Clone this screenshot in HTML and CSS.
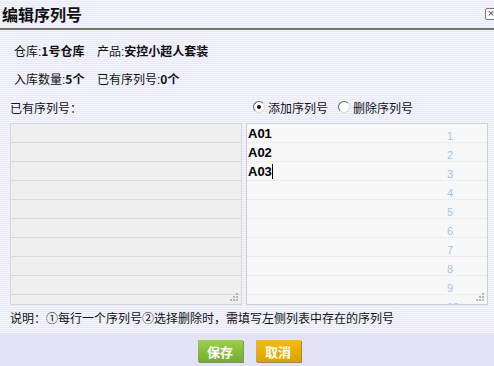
FILE: index.html
```html
<!DOCTYPE html>
<html lang="zh-CN">
<head>
<meta charset="utf-8">
<title>编辑序列号</title>
<link rel="stylesheet" href="styles.css">
</head>
<body>
<div class="dialog">
  <div class="titlebar">
    <h1 class="title">编辑序列号</h1>
    <span class="close">×</span>
  </div>
  <div class="content">
    <div class="info">
      <span class="item">仓库:<b>1号仓库</b></span><span class="item">产品:<b>安控小超人套装</b></span>
    </div>
    <div class="info">
      <span class="item">入库数量:<b>5个</b></span><span class="item">已有序列号:<b>0个</b></span>
    </div>
    <div class="toolbar">
      <span class="label">已有序列号：</span>
      <span class="options">
        <span class="radio checked"></span><span class="opt">添加序列号</span>
        <span class="radio"></span><span class="opt">删除序列号</span>
      </span>
    </div>
    <div class="panels">
      <div class="box box-left">
        <div class="lrow"></div><div class="lrow"></div><div class="lrow"></div>
        <div class="lrow"></div><div class="lrow"></div><div class="lrow"></div>
        <div class="lrow"></div><div class="lrow"></div><div class="lrow"></div>
        <div class="lrow"></div>
        <svg class="grip" width="9" height="9" viewBox="0 0 9 9"><g fill="#b4b4b4"><rect x="6" y="0" width="2" height="2"/><rect x="3" y="3" width="2" height="2"/><rect x="6" y="3" width="2" height="2"/><rect x="0" y="6" width="2" height="2"/><rect x="3" y="6" width="2" height="2"/><rect x="6" y="6" width="2" height="2"/></g></svg>
      </div>
      <div class="box box-right">
        <div class="rrow"><span class="code">A01</span><span class="num">1</span></div>
        <div class="rrow"><span class="code">A02</span><span class="num">2</span></div>
        <div class="rrow"><span class="code">A03<i class="caret"></i></span><span class="num">3</span></div>
        <div class="rrow"><span class="code"></span><span class="num">4</span></div>
        <div class="rrow"><span class="code"></span><span class="num">5</span></div>
        <div class="rrow"><span class="code"></span><span class="num">6</span></div>
        <div class="rrow"><span class="code"></span><span class="num">7</span></div>
        <div class="rrow"><span class="code"></span><span class="num">8</span></div>
        <div class="rrow"><span class="code"></span><span class="num">9</span></div>
        <div class="rrow"><span class="code"></span><span class="num">10</span></div>
        <svg class="grip" width="9" height="9" viewBox="0 0 9 9"><g fill="#b4b4b4"><rect x="6" y="0" width="2" height="2"/><rect x="3" y="3" width="2" height="2"/><rect x="6" y="3" width="2" height="2"/><rect x="0" y="6" width="2" height="2"/><rect x="3" y="6" width="2" height="2"/><rect x="6" y="6" width="2" height="2"/></g></svg>
      </div>
    </div>
    <p class="note">说明：①每行一个序列号②选择删除时，需填写左侧列表中存在的序列号</p>
  </div>
  <div class="footer">
    <button class="btn btn-save">保存</button>
    <button class="btn btn-cancel">取消</button>
  </div>
</div>
</body>
</html>
```
FILE: styles.css
```css
html, body {
  margin: 0;
  padding: 0;
}
body {
  width: 494px;
  height: 366px;
  overflow: hidden;
  font-family: "Liberation Sans", "Noto Sans CJK SC", sans-serif;
  font-size: 12px;
  color: #111;
}
.dialog {
  width: 494px;
  height: 366px;
  display: flex;
  flex-direction: column;
  background: repeating-linear-gradient(to bottom, #f5f5fd 0, #f5f5fd 1px, #e8e9f8 1px, #e8e9f8 2px);
}
.titlebar {
  position: relative;
  height: 28px;
  border-bottom: 2px solid #78785a;
  display: flex;
  align-items: center;
}
.title {
  margin: 0 0 0 2px;
  font-family: "Noto Sans CJK SC", sans-serif;
  font-size: 16px;
  font-weight: bold;
  line-height: 24px;
  color: #111;
}
.close {
  position: absolute;
  left: 485px;
  top: 8px;
  width: 10px;
  height: 10px;
  border: 1px solid #777;
  border-radius: 2px;
  font-size: 11px;
  line-height: 9px;
  text-align: center;
  color: #444;
  background: #fafafa;
}
.content {
  flex: 1;
  display: flex;
  flex-direction: column;
  min-height: 0;
}
.info {
  height: 28px;
  line-height: 28px;
  padding-left: 14px;
}
.info:first-child {
  margin-top: 7px;
}
.item {
  display: inline-block;
  min-width: 83px;
}
.info b {
  font-family: "Noto Sans CJK SC", sans-serif;
  font-weight: bold;
}
.toolbar {
  height: 28px;
  display: flex;
  align-items: center;
  padding-left: 10px;
}
.label {
  width: 243px;
}
.options {
  display: flex;
  align-items: center;
}
.radio {
  width: 10px;
  height: 10px;
  border-radius: 50%;
  border: 1px solid #888;
  border-top-color: #666;
  border-left-color: #666;
  border-bottom-color: #ddd;
  border-right-color: #ddd;
  background: #fff;
  position: relative;
  margin-right: 3px;
}
.radio.checked::after {
  content: "";
  position: absolute;
  left: 3px;
  top: 3px;
  width: 4px;
  height: 4px;
  border-radius: 50%;
  background: #111;
}
.opt {
  margin-right: 10px;
}
.panels {
  display: flex;
  gap: 4px;
  padding-left: 10px;
  margin-top: 2px;
  height: 182px;
  flex-shrink: 0;
}
.box {
  position: relative;
  overflow: hidden;
  box-sizing: border-box;
  height: 182px;
}
.box-left {
  width: 232px;
  border: 1px solid #d6d6d6;
  background: #efefef;
}
.lrow {
  height: 18px;
  border-bottom: 1px solid #dcdcdc;
}
.box-right {
  width: 242px;
  border: 1px solid #cfcfcf;
  background: #f7f7f7;
}
.rrow {
  height: 18px;
  border-bottom: 1px dotted #e2e2e2;
  display: flex;
}
.code {
  flex: 1;
  padding-left: 1px;
  font-family: "Liberation Sans", sans-serif;
  font-weight: bold;
  font-size: 13px;
  line-height: 19px;
  color: #000;
}
.caret {
  display: inline-block;
  width: 1px;
  height: 15px;
  background: #000;
  vertical-align: -3px;
}
.num {
  width: 40px;
  padding-top: 5px;
  font-family: "Liberation Sans", sans-serif;
  font-size: 11px;
  line-height: 15px;
  color: #a9c3e2;
  text-align: left;
}
.grip {
  position: absolute;
  right: 2px;
  bottom: 2px;
}
.note {
  margin: 0;
  height: 28px;
  line-height: 28px;
  padding-left: 10px;
}
.footer {
  height: 33px;
  flex-shrink: 0;
  background: #e3e3f6;
  display: flex;
  justify-content: center;
  align-items: flex-start;
  gap: 13px;
  padding-top: 7px;
  box-sizing: border-box;
  padding-left: 4px;
}
.btn {
  width: 45px;
  height: 22px;
  border: none;
  padding: 0;
  font-family: "Noto Sans CJK SC", sans-serif;
  font-size: 13px;
  font-weight: bold;
  color: #fff;
  box-shadow: 1px 1px 0 #8a8a8a;
}
.btn-save {
  background: linear-gradient(to bottom, #9ccf4c, #74ad2c);
}
.btn-cancel {
  background: linear-gradient(to bottom, #f2bd12, #dea100);
}
```
